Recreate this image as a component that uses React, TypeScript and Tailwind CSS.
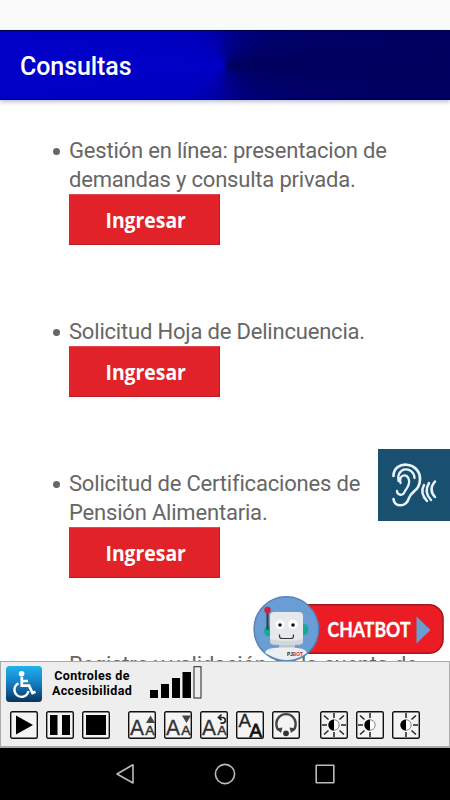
import React from 'react';

function Item({ lines }: { lines: string[] }) {
  return (
    <li className="mb-[72px]">
      <div className="relative">
        <span className="absolute -left-[16px] top-[12px] size-[7px] rounded-full bg-[#666]" />
        {lines.map((l) => (
          <p key={l} className="h-[29px] whitespace-nowrap leading-[29px]">{l}</p>
        ))}
      </div>
      <button className="flex h-[51px] w-[151px] items-center justify-center border border-t-[#e8494f] border-r-[#b91d24] border-b-[#b91d24] border-l-[#d9222a] bg-[#e12229] pb-px pl-[2px] font-['Open_Sans',sans-serif] text-[22px] font-bold leading-none tracking-normal text-white">
        <span className="inline-block origin-center scale-x-[0.88]">Ingresar</span>
      </button>
    </li>
  );
}

function Tool({ children, className = '' }: { children: React.ReactNode; className?: string }) {
  return (
    <svg viewBox="0 0 28 28" className={`size-[28px] shrink-0 ${className}`} fill="none">
      <rect x="0.7" y="0.7" width="26.6" height="26.6" rx="1.5" fill="#f4f4f4" stroke="#111" strokeWidth="1.4" />
      {children}
    </svg>
  );
}

function SmallLetters() {
  return (
    <>
      <text x="2" y="24.3" fontSize="21.5" fill="#333" stroke="#333" strokeWidth=".3" fontFamily="Liberation Sans, sans-serif" textLength="14" lengthAdjust="spacingAndGlyphs">A</text>
      <text x="17.3" y="24.3" fontSize="13.5" fill="#333" stroke="#333" strokeWidth=".5" fontFamily="Liberation Sans, sans-serif" textLength="9.3" lengthAdjust="spacingAndGlyphs">A</text>
    </>
  );
}

function Sun({ left = true, right = true }: { left?: boolean; right?: boolean }) {
  return (
    <g transform="translate(14 14)">
      <circle r="5.2" fill="#fff" stroke="#888" strokeWidth="1" />
      <path d="M0-5.6A5.6 5.6 0 0 0 0 5.6Z" fill="#000" />
      <g stroke="#222" strokeWidth="1.5">
        <path d="M0-12V-7M0 7V12" />
        {left && <path d="M-12 0H-7M-10-9.5L-5.5-5.5M-10 9.5L-5.5 5.5" />}
        {right && <path d="M12 0H7M10-9.5L5.5-5.5M10 9.5L5.5 5.5" />}
      </g>
    </g>
  );
}

function Chatbot() {
  return (
    <svg viewBox="0 0 192 66" className="absolute left-[253px] top-[496px] h-[66px] w-[192px]">
      <rect x="30" y="8.7" width="160" height="48.6" rx="14" fill="#ec1c25" stroke="#a3161c" strokeWidth="1.6" />
      <circle cx="33.3" cy="33" r="32.3" fill="#699dd3" stroke="#5681b4" strokeWidth="1.4" />
      <ellipse cx="15.5" cy="35" rx="4.5" ry="5.5" fill="#18a99c" />
      <ellipse cx="51" cy="33.5" rx="4.5" ry="5.5" fill="#18a99c" />
      <path d="M14.5 14V34" stroke="#333b43" strokeWidth="2" />
      <circle cx="14.5" cy="14" r="3.2" fill="#d71f38" />
      <rect x="26" y="47" width="16" height="6" fill="#bcc7ce" />
      <path d="M12 57C13 52 20 51.5 33 51.5S52 52 54 57L49 60Q34 68 18 60Z" fill="#eceff1" />
      <rect x="17" y="16" width="33" height="32.5" rx="4" fill="#e6e9ec" />
      <path d="M17 43Q33 47 50 43V44.5Q50 48.5 46 48.5H21Q17 48.5 17 44.5Z" fill="#d1d7db" />
      <circle cx="27" cy="28.5" r="4.7" fill="#fff" />
      <circle cx="40" cy="28.5" r="4.7" fill="#fff" />
      <circle cx="27" cy="29" r="1.8" fill="#111" />
      <circle cx="40" cy="29" r="1.8" fill="#111" />
      <path d="M26.5 38.5V40Q26.5 42.5 29 42.5H38Q40.5 42.5 40.5 40V38.5" fill="none" stroke="#333" strokeWidth="1.2" />
      <text x="34" y="59.5" fontSize="6" fontWeight="900" fontFamily="Liberation Sans, sans-serif" fill="#222" textLength="16" lengthAdjust="spacingAndGlyphs">PJ<tspan fill="#d71f38">BOT</tspan></text>
      <text x="74.5" y="40.5" fontSize="20" fontWeight="700" fontFamily="Lato, sans-serif" fill="#fff" stroke="#fff" strokeWidth=".3" textLength="83" lengthAdjust="spacingAndGlyphs">CHATBOT</text>
      <path d="M163.5 20.5L177.5 34L163.5 47.5Z" fill="#699dd3" />
    </svg>
  );
}

export default function App() {
  return (
    <div className="flex h-[800px] w-[450px] flex-col overflow-hidden bg-white font-[Roboto,sans-serif]">
      <div className="h-[30px] shrink-0 bg-[#fafafa]" />
      <header className="z-10 flex h-[70px] shrink-0 items-center border-y border-[#000048] bg-[conic-gradient(from_90deg_at_225px_35px,#00005e_0deg,#000064_12deg,#000076_45deg,#000092_85deg,#0000a8_105deg,#0000bc_135deg,#0000c8_180deg,#0000bc_225deg,#0000a8_255deg,#000092_275deg,#000076_315deg,#000064_348deg,#00005e_360deg)] bg-origin-border px-5 pt-[3px] shadow-[0_2px_4px_rgba(40,50,110,0.3)]">
        <h1 className="text-[25px] font-medium leading-none tracking-[-0.08px] text-white">Consultas</h1>
      </header>
      <main className="relative min-h-0 flex-1 overflow-hidden">
        <ul className="pl-[69px] pt-[36px] text-[22px] tracking-[-0.19px] text-[#666]">
          <Item lines={['Gestión en línea: presentacion de', 'demandas y consulta privada.']} />
          <Item lines={['Solicitud Hoja de Delincuencia.']} />
          <Item lines={['Solicitud de Certificaciones de', 'Pensión Alimentaria.']} />
          <li className="whitespace-nowrap leading-[29px]">Registro y validación de la cuenta de</li>
        </ul>
        <button className="absolute right-0 top-[349px] h-[72px] w-[72px] bg-[#19506f]" aria-label="Audio">
          <svg viewBox="0 0 72 72" className="size-[72px]" fill="none" stroke="#e8f3fa" strokeWidth="2.7" strokeLinecap="round">
            <path d="M15.5 27C15.5 11 42 12 42 30C42 42 33 42 31 49C28 59 16 58 15.5 50" />
            <path d="M20.5 32C18 17 36 17 36.5 29M22.5 34C20 25 30 24 31 31C32 36 29 39 27 42C25 48 19 46 19 42" strokeWidth="2.3" />
            <path d="M46 36Q41.5 44 49 52M51 34Q45.5 43 53 51M57 32.5Q50 40.5 57 48" strokeWidth="2.5" />
          </svg>
        </button>
        <Chatbot />
      </main>
      <section className="h-[87px] shrink-0 border border-b-2 border-[#aaa] bg-[#eee]">
        <div className="flex h-[42px] pl-[5px] pt-[4px]">
          <svg viewBox="0 0 36 36" className="size-[36px]">
            <defs>
              <linearGradient id="blue" x1="0" y1="0" x2="0" y2="1">
                <stop offset="0" stopColor="#20b2ee" />
                <stop offset=".5" stopColor="#147cc0" />
                <stop offset="1" stopColor="#0b325c" />
              </linearGradient>
            </defs>
            <rect width="36" height="36" rx="3.5" fill="url(#blue)" />
            <circle cx="15.6" cy="7.8" r="2.8" fill="#fff" />
            <path d="M15.8 11V19.6H23L26.5 27L29.5 25.7M16 15H22" fill="none" stroke="#fff" strokeWidth="2.7" />
            <path d="M12.5 17.3A7.1 7.1 0 1 0 22.5 25" fill="none" stroke="#fff" strokeWidth="2.3" />
          </svg>
          <p className="ml-[10px] mt-[3px] w-[80px] whitespace-nowrap text-center text-[12.5px] font-bold leading-[14.5px] tracking-[0.35px] text-black">
            <span className="block">Controles de</span>
            <span className="-mx-2 block">Accesibilidad</span>
          </p>
          <svg viewBox="0 0 52 33" className="ml-[18px] h-[33px] w-[52px]">
            <path d="M0 24H8V32H0ZM11 18H19V32H11ZM22 12H30V32H22ZM32.5 6H41V32H32.5Z" fill="#000" />
            <rect x="44" y=".7" width="7" height="31.3" fill="#eee" stroke="#222" />
          </svg>
        </div>
        <div className="flex gap-[8px] pl-[9px] pt-[7px]">
          <Tool><path d="M6 4.5L23 14L6 23.5Z" fill="#000" /></Tool>
          <Tool><path d="M4 4H11.5V24H4ZM16 4H24V24H16Z" fill="#000" /></Tool>
          <Tool><path d="M4 4H24V24H4Z" fill="#000" /></Tool>
          <Tool className="ml-[10px]"><SmallLetters /><path d="M18 12H27L22.5 4.5Z" fill="#444" /></Tool>
          <Tool><SmallLetters /><path d="M18 4.5H27L22.5 12Z" fill="#444" /></Tool>
          <Tool><SmallLetters /><path d="M18.5 6.5H23A2.9 2.9 0 0 1 23 12.2H20.5M21.5 3.5L18.5 6.5L21.5 9" stroke="#222" strokeWidth="1.7" /></Tool>
          <Tool>
            <text x="2.5" y="16" fontSize="18.5" fill="#222" stroke="#222" strokeWidth=".3" fontFamily="Liberation Sans, sans-serif" textLength="12.5" lengthAdjust="spacingAndGlyphs">A</text>
            <text x="13.5" y="26" fontSize="18.5" fill="#111" stroke="#111" strokeWidth=".8" fontFamily="Liberation Sans, sans-serif" textLength="12.5" lengthAdjust="spacingAndGlyphs">A</text>
          </Tool>
          <Tool>
            <path d="M7 19.5A9.7 9.7 0 1 1 21 19.5" stroke="#444" strokeWidth="2.3" />
            <path d="M4 17.5L10.5 16.5L9 22ZM24 17.5L17.5 16.5L19 22Z" fill="#444" />
            <circle cx="14" cy="22.3" r="2.9" fill="#333" />
          </Tool>
          <Tool className="ml-[12px]"><Sun /></Tool>
          <Tool><Sun right={false} /></Tool>
          <Tool><Sun left={false} /></Tool>
        </div>
      </section>
      <nav className="flex h-[52px] shrink-0 items-center justify-center bg-black">
        <svg viewBox="0 0 220 24" className="h-[24px] w-[220px]" fill="none" stroke="#bbb" strokeWidth="1.6" strokeLinejoin="round">
          <path d="M18 2.8V21L2 12Z" />
          <circle cx="110" cy="12" r="9.6" />
          <rect x="201.2" y="3.2" width="17.6" height="17.6" />
        </svg>
      </nav>
    </div>
  );
}
